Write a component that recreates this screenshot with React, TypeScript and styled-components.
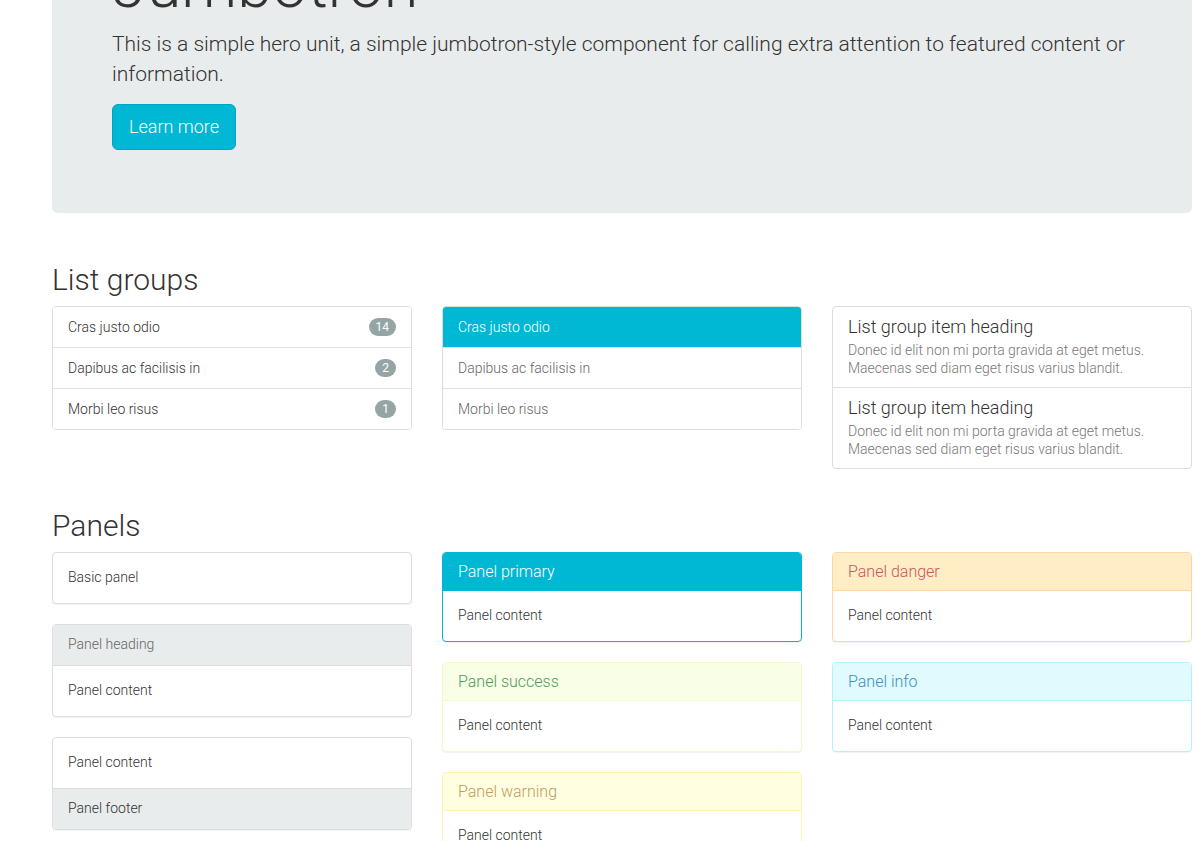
import React from "react";
import styled, { createGlobalStyle } from "styled-components";

const Global = createGlobalStyle`
  html, body { margin: 0; padding: 0; background: #fff; }
  body {
    font-family: Roboto, "Noto Sans", "Liberation Sans", sans-serif;
    font-weight: 300;
    font-size: 14px;
    line-height: 1.42857;
    color: #333;
  }
  * { box-sizing: border-box; }
`;

const Container = styled.div`
  width: 1140px;
  margin-left: 52px;
  display: flex;
  flex-direction: column;
`;

const Jumbotron = styled.div`
  margin-top: -117px;
  margin-bottom: 30px;
  padding: 48px 60px;
  background: #e9ecec;
  border-radius: 6px;
`;

const JumboTitle = styled.h1`
  margin: 20px 0 10px;
  font-size: 63px;
  line-height: 1.1;
  font-weight: 300;
  color: #333;
`;

const JumboText = styled.p`
  margin: 0 0 15px;
  font-size: 21px;
  line-height: 1.4;
  font-weight: 300;
`;

const BigButton = styled.a`
  display: inline-block;
  padding: 10px 16px;
  font-size: 18px;
  line-height: 1.3333;
  border-radius: 6px;
  background: #00b8d4;
  border: 1px solid #00a5bf;
  color: #fff;
  text-decoration: none;
  font-weight: 300;
`;

const SectionTitle = styled.h2`
  margin: 20px 0 10px;
  font-size: 30px;
  line-height: 1.1;
  font-weight: 300;
  color: #333;
`;

const Row = styled.div`
  display: grid;
  grid-template-columns: repeat(3, 360px);
  column-gap: 30px;
  align-items: start;
`;

const Col = styled.div`
  display: flex;
  flex-direction: column;
`;

const ListGroup = styled.div`
  margin-bottom: 20px;
  border: 1px solid #ddd;
  border-radius: 4px;
  overflow: hidden;
  background: #fff;
`;

const ListItem = styled.div<{ $active?: boolean; $link?: boolean }>`
  display: flex;
  align-items: center;
  justify-content: space-between;
  padding: 10px 15px;
  line-height: 20px;
  color: ${(p) => (p.$active ? "#fff" : p.$link ? "#666" : "#333")};
  background: ${(p) => (p.$active ? "#00b8d4" : "#fff")};
  & + & {
    border-top: 1px solid #ddd;
  }
`;

const Badge = styled.span`
  display: inline-block;
  min-width: 10px;
  padding: 3px 7px;
  font-size: 12px;
  line-height: 1;
  color: #fff;
  text-align: center;
  background: #95a5a6;
  border-radius: 10px;
  font-weight: 400;
`;

const HeadingItem = styled.div`
  padding: 10px 15px;
  & + & {
    border-top: 1px solid #ddd;
  }
`;

const ItemHeading = styled.h4`
  margin: 0 0 5px;
  font-size: 18px;
  line-height: 19px;
  font-weight: 300;
  color: #333;
`;

const ItemText = styled.p`
  margin: 0;
  line-height: 18px;
  color: #777;
`;

type Tone = "default" | "primary" | "success" | "warning" | "danger" | "info";

const tones: Record<Tone, { border: string; bg: string; color: string }> = {
  default: { border: "#ddd", bg: "#e9ecec", color: "#666" },
  primary: { border: "#00b8d4", bg: "#00b8d4", color: "#fff" },
  success: { border: "#f1fac9", bg: "#f9fee7", color: "#4e9a5c" },
  warning: { border: "#fff3b3", bg: "#fffee0", color: "#bf9b5e" },
  danger: { border: "#fed5a4", bg: "#ffedc6", color: "#c9575c" },
  info: { border: "#b4f2fb", bg: "#e1fafd", color: "#3b8fbf" },
};

const Panel = styled.div<{ $tone: Tone }>`
  margin-bottom: 20px;
  background: #fff;
  border: 1px solid ${(p) => tones[p.$tone].border};
  border-radius: 4px;
  box-shadow: 0 1px 1px rgba(0, 0, 0, 0.05);
  overflow: hidden;
`;

const PanelHeading = styled.div<{ $tone: Tone }>`
  padding: 10px 15px;
  background: ${(p) => tones[p.$tone].bg};
  color: ${(p) => tones[p.$tone].color};
  border-bottom: 1px solid ${(p) => tones[p.$tone].border};
`;

const PanelTitle = styled.h3`
  margin: 0;
  font-size: 16px;
  line-height: 17px;
  font-weight: 300;
  color: inherit;
`;

const PanelBody = styled.div`
  padding: 15px;
`;

const PanelFooter = styled.div`
  padding: 10px 15px;
  background: #e9ecec;
  border-top: 1px solid #ddd;
`;

const headingItems = [0, 1];

export default function App() {
  return (
    <>
      <Global />
      <Container>
        <Jumbotron>
          <JumboTitle>Jumbotron</JumboTitle>
          <JumboText>
            This is a simple hero unit, a simple jumbotron-style component for calling extra
            attention to featured content or information.
          </JumboText>
          <JumboText>
            <BigButton href="#">Learn more</BigButton>
          </JumboText>
        </Jumbotron>

        <SectionTitle>List groups</SectionTitle>
        <Row>
          <Col>
            <ListGroup>
              <ListItem>
                Cras justo odio <Badge>14</Badge>
              </ListItem>
              <ListItem>
                Dapibus ac facilisis in <Badge>2</Badge>
              </ListItem>
              <ListItem>
                Morbi leo risus <Badge>1</Badge>
              </ListItem>
            </ListGroup>
          </Col>
          <Col>
            <ListGroup>
              <ListItem $active>Cras justo odio</ListItem>
              <ListItem $link>Dapibus ac facilisis in</ListItem>
              <ListItem $link>Morbi leo risus</ListItem>
            </ListGroup>
          </Col>
          <Col>
            <ListGroup>
              {headingItems.map((i) => (
                <HeadingItem key={i}>
                  <ItemHeading>List group item heading</ItemHeading>
                  <ItemText>
                    Donec id elit non mi porta gravida at eget metus. Maecenas sed diam eget risus
                    varius blandit.
                  </ItemText>
                </HeadingItem>
              ))}
            </ListGroup>
          </Col>
        </Row>

        <SectionTitle>Panels</SectionTitle>
        <Row>
          <Col>
            <Panel $tone="default">
              <PanelBody>Basic panel</PanelBody>
            </Panel>
            <Panel $tone="default">
              <PanelHeading $tone="default">Panel heading</PanelHeading>
              <PanelBody>Panel content</PanelBody>
            </Panel>
            <Panel $tone="default">
              <PanelBody>Panel content</PanelBody>
              <PanelFooter>Panel footer</PanelFooter>
            </Panel>
          </Col>
          <Col>
            <Panel $tone="primary">
              <PanelHeading $tone="primary">
                <PanelTitle>Panel primary</PanelTitle>
              </PanelHeading>
              <PanelBody>Panel content</PanelBody>
            </Panel>
            <Panel $tone="success">
              <PanelHeading $tone="success">
                <PanelTitle>Panel success</PanelTitle>
              </PanelHeading>
              <PanelBody>Panel content</PanelBody>
            </Panel>
            <Panel $tone="warning">
              <PanelHeading $tone="warning">
                <PanelTitle>Panel warning</PanelTitle>
              </PanelHeading>
              <PanelBody>Panel content</PanelBody>
            </Panel>
          </Col>
          <Col>
            <Panel $tone="danger">
              <PanelHeading $tone="danger">
                <PanelTitle>Panel danger</PanelTitle>
              </PanelHeading>
              <PanelBody>Panel content</PanelBody>
            </Panel>
            <Panel $tone="info">
              <PanelHeading $tone="info">
                <PanelTitle>Panel info</PanelTitle>
              </PanelHeading>
              <PanelBody>Panel content</PanelBody>
            </Panel>
          </Col>
        </Row>
      </Container>
    </>
  );
}
